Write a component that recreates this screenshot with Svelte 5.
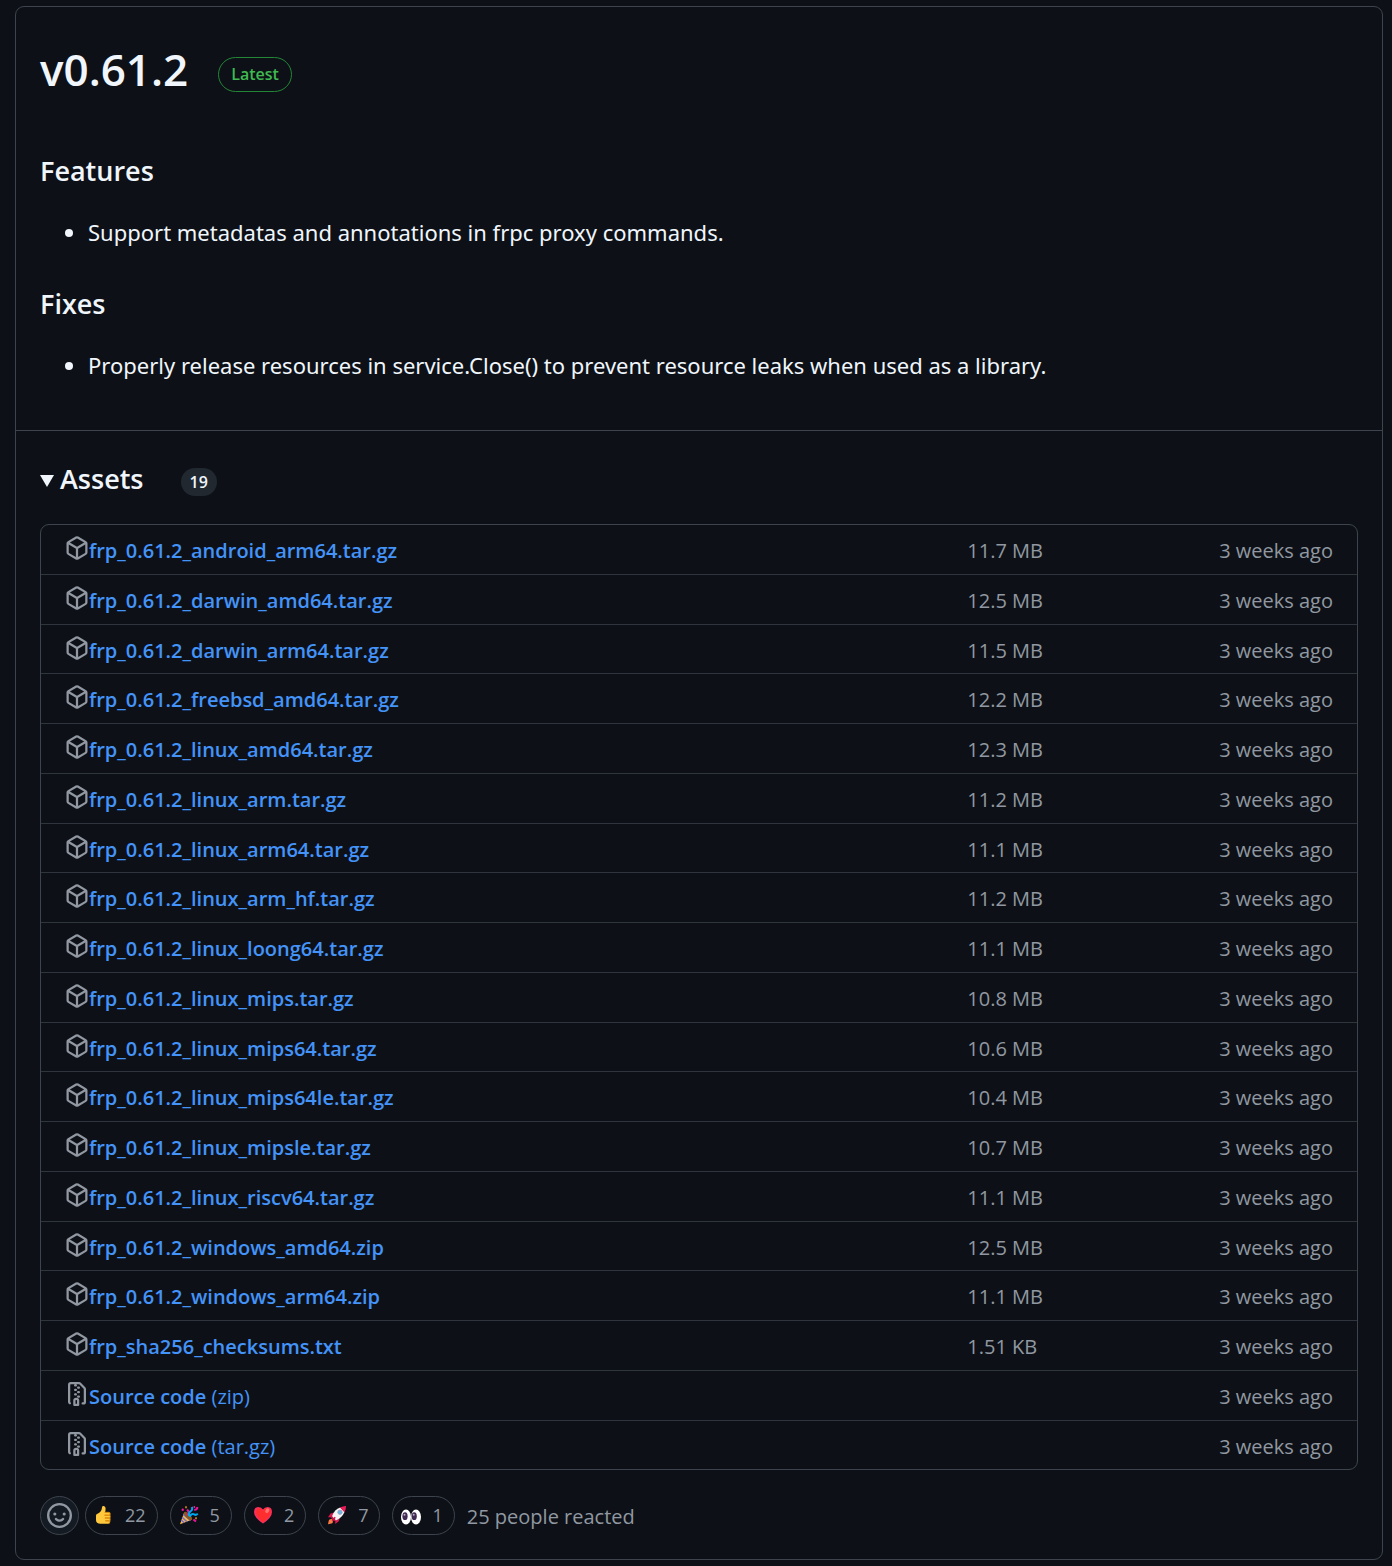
<script>
  const assets = [
    { name: 'frp_0.61.2_android_arm64.tar.gz', size: '11.7 MB' },
    { name: 'frp_0.61.2_darwin_amd64.tar.gz', size: '12.5 MB' },
    { name: 'frp_0.61.2_darwin_arm64.tar.gz', size: '11.5 MB' },
    { name: 'frp_0.61.2_freebsd_amd64.tar.gz', size: '12.2 MB' },
    { name: 'frp_0.61.2_linux_amd64.tar.gz', size: '12.3 MB' },
    { name: 'frp_0.61.2_linux_arm.tar.gz', size: '11.2 MB' },
    { name: 'frp_0.61.2_linux_arm64.tar.gz', size: '11.1 MB' },
    { name: 'frp_0.61.2_linux_arm_hf.tar.gz', size: '11.2 MB' },
    { name: 'frp_0.61.2_linux_loong64.tar.gz', size: '11.1 MB' },
    { name: 'frp_0.61.2_linux_mips.tar.gz', size: '10.8 MB' },
    { name: 'frp_0.61.2_linux_mips64.tar.gz', size: '10.6 MB' },
    { name: 'frp_0.61.2_linux_mips64le.tar.gz', size: '10.4 MB' },
    { name: 'frp_0.61.2_linux_mipsle.tar.gz', size: '10.7 MB' },
    { name: 'frp_0.61.2_linux_riscv64.tar.gz', size: '11.1 MB' },
    { name: 'frp_0.61.2_windows_amd64.zip', size: '12.5 MB' },
    { name: 'frp_0.61.2_windows_arm64.zip', size: '11.1 MB' },
    { name: 'frp_sha256_checksums.txt', size: '1.51 KB' },
    { name: 'Source code', format: '(zip)' },
    { name: 'Source code', format: '(tar.gz)' }
  ];

  let reactions = $state([
    { id: 'thumbs', count: 22, on: false },
    { id: 'tada', count: 5, on: false },
    { id: 'heart', count: 2, on: false },
    { id: 'rocket', count: 7, on: false },
    { id: 'eyes', count: 1, on: false }
  ]);

  function toggle(reaction) {
    reaction.on = !reaction.on;
    reaction.count += reaction.on ? 1 : -1;
  }
</script>

<main class="release">
  <section class="notes">
    <header class="title">
      <h1>v0.61.2</h1>
      <a class="label" href="#latest">Latest</a>
    </header>

    <h3>Features</h3>
    <ul>
      <li>Support metadatas and annotations in frpc proxy commands.</li>
    </ul>

    <h3>Fixes</h3>
    <ul>
      <li>Properly release resources in service.Close() to prevent resource leaks when used as a library.</li>
    </ul>
  </section>

  <section class="footer">
    <details open>
      <summary>
        <svg class="caret" width="14" height="12" viewBox="0 0 14 12"><path d="M0 0h14L7 12z" fill="currentColor" /></svg>
        <span class="assets-title">Assets</span>
        <span class="counter">{assets.length}</span>
      </summary>

      <ul class="assets">
        {#each assets as asset}
          <li>
            <div class="file">
              {#if asset.format}
                <svg width="24" height="24" viewBox="0 0 16 16" fill="currentColor">
                  <path d="M3.5 1.75v11.5c0 .09.048.173.126.217a.75.75 0 0 1-.752 1.298A1.748 1.748 0 0 1 2 13.25V1.75C2 .784 2.784 0 3.75 0h5.586c.464 0 .909.185 1.237.513l2.914 2.914c.329.328.513.773.513 1.237v8.586A1.75 1.75 0 0 1 12.25 15h-.5a.75.75 0 0 1 0-1.5h.5a.25.25 0 0 0 .25-.25V4.664a.25.25 0 0 0-.073-.177L9.513 1.573a.25.25 0 0 0-.177-.073H7.25a.75.75 0 0 1 0 1.5h-.5a.75.75 0 0 1 0-1.5h-3a.25.25 0 0 0-.25.25Zm3.75 8.75h.5c.966 0 1.75.784 1.75 1.75v3a.75.75 0 0 1-.75.75h-2.5a.75.75 0 0 1-.75-.75v-3c0-.966.784-1.75 1.75-1.75ZM6 5.25a.75.75 0 0 1 .75-.75h.5a.75.75 0 0 1 0 1.5h-.5A.75.75 0 0 1 6 5.25Zm.75 2.25h.5a.75.75 0 0 1 0 1.5h-.5a.75.75 0 0 1 0-1.5ZM8 6.75A.75.75 0 0 1 8.75 6h.5a.75.75 0 0 1 0 1.5h-.5A.75.75 0 0 1 8 6.75ZM8.75 3h.5a.75.75 0 0 1 0 1.5h-.5a.75.75 0 0 1 0-1.5ZM8 9.75A.75.75 0 0 1 8.75 9h.5a.75.75 0 0 1 0 1.5h-.5A.75.75 0 0 1 8 9.75Zm-1 2.5v2.25h1v-2.25a.25.25 0 0 0-.25-.25h-.5a.25.25 0 0 0-.25.25Z" />
                </svg>
              {:else}
                <svg width="24" height="24" viewBox="0 0 16 16" fill="currentColor">
                  <path d="m8.878.392 5.25 3.045c.54.314.872.89.872 1.514v6.098a1.75 1.75 0 0 1-.872 1.514l-5.25 3.045a1.75 1.75 0 0 1-1.756 0l-5.25-3.045A1.75 1.75 0 0 1 1 11.049V4.951c0-.624.332-1.201.872-1.514L7.122.392a1.75 1.75 0 0 1 1.756 0ZM7.875 1.69l-4.63 2.685L8 7.133l4.755-2.758-4.63-2.685a.248.248 0 0 0-.25 0ZM2.5 5.677v5.372c0 .09.047.171.125.216l4.625 2.683V8.432Zm6.25 8.271 4.625-2.683a.25.25 0 0 0 .125-.216V5.677L8.75 8.432Z" />
                </svg>
              {/if}
              <a href="#download"><b>{asset.name}</b>{#if asset.format}&nbsp;{asset.format}{/if}</a>
            </div>
            <span class="size">{asset.size ?? ''}</span>
            <time>3 weeks ago</time>
          </li>
        {/each}
      </ul>
    </details>

    <div class="reactions">
      <button class="add" aria-label="Add a reaction">
        <svg width="25" height="25" viewBox="0 0 16 16" fill="currentColor">
          <path d="M8 0a8 8 0 1 1 0 16A8 8 0 0 1 8 0ZM1.5 8a6.5 6.5 0 1 0 13 0 6.5 6.5 0 0 0-13 0Zm3.82 1.636a.75.75 0 0 1 1.038.175l.007.009c.103.118.22.222.35.31.264.178.683.37 1.285.37.602 0 1.02-.192 1.285-.371.13-.088.247-.192.35-.31l.007-.008a.75.75 0 0 1 1.222.87l-.022-.015c.02.013.021.015.021.015v.001l-.001.002-.002.003-.005.007-.014.019a2.066 2.066 0 0 1-.184.213c-.16.166-.338.316-.53.445-.63.418-1.37.638-2.127.629-.946 0-1.652-.308-2.126-.63a3.331 3.331 0 0 1-.715-.657l-.014-.02-.005-.006-.002-.003v-.002h-.001l.613-.432-.614.43a.75.75 0 0 1 .183-1.044ZM12 7a1 1 0 1 1-2 0 1 1 0 0 1 2 0ZM5 8a1 1 0 1 1 0-2 1 1 0 0 1 0 2Z" />
        </svg>
      </button>

      {#each reactions as reaction}
        <button class="reaction" aria-label={reaction.id} aria-pressed={reaction.on} onclick={() => toggle(reaction)}>
          <svg width="20" height="20" viewBox="0 0 20 20">
            {#if reaction.id === 'thumbs'}
              <path d="M2 10.5Q2 9 4 8.6Q7.5 7 8 2.5Q8.1.8 9.7 1.1Q12 1.5 11.5 5L11.2 7.3H15Q16.3 7.3 16.3 8.7V16.5Q16.3 18.8 14 18.8H6.5Q2 18.8 2 15z" fill="#ffc83d" />
              <path d="M10.5 7.3h4.2q1.6.2 1.4 1.6-.1 1.2-1.4 1.3h-4.2m0 0h4.4q1.4.1 1.4 1.4t-1.4 1.4h-4m0 0h3.8q1.3.1 1.3 1.4t-1.3 1.4h-3.4m0 0h3.2q1.2.2 1.1 1.4-.1 1.5-1.6 1.5" fill="none" stroke="#d67d00" stroke-width=".8" />
            {:else if reaction.id === 'tada'}
              <path d="m5.2 7.2 7.6 7.5L1 19.2z" fill="#fcb93d" />
              <path d="m4.4 9.4 7.2 6M3.2 12.3l4.7 4.5M2.2 15l3 2.8" stroke="#6b68d8" stroke-width="1.5" />
              <ellipse cx="9" cy="11" rx="5.2" ry="2.2" transform="rotate(45 9 11)" fill="#8b5a20" />
              <path d="M8.6 10.4Q11 7 8 4.6M15.2 4.7Q18.3 5 18.3 2M14.4 14.5l2.6 2" fill="none" stroke="#f0139a" stroke-width="2" />
              <path d="M10 10.8Q9.5 7 12 5.8 14 4.7 12.8 2M10.6 11.7Q13 7.6 15.4 9.5q1.3 1 3.4-.7" fill="none" stroke="#00a6ed" stroke-width="2" />
              <path d="M6 1.2h2v2H6zM16 12.2h2v2h-2z" fill="#b4770d" />
              <circle cx="3.7" cy="4.8" r="1.2" fill="#f0139a" />
              <path d="M14.6 1h1.4v2h-1.4z" fill="#f0139a" />
            {:else if reaction.id === 'heart'}
              <path d="M10 18.5Q1 12.5 1 7Q1 2.2 5.2 2Q8.5 2 10 4.5Q11.5 2 14.8 2Q19 2.2 19 7Q19 12.5 10 18.5z" fill="#f92f60" />
              <path d="M10 17Q4 12.5 3.2 8Q3 4 6 3.3Q8.8 3.3 10 6Q12 2.5 14.9 2.9Q18 3.5 17.8 7.2Q17 12 10 17z" fill="#ff2e2e" />
              <ellipse cx="14.3" cy="5.7" rx="1.8" ry="2.5" transform="rotate(35 14.3 5.7)" fill="#ff7370" />
            {:else if reaction.id === 'rocket'}
              <path d="m7.6 7.5-4 1L1 12.2l5 .1 2.2 2 .1 4.7 3.5-2.7 1-3.8z" fill="#d9184f" />
              <path d="M5 11.5Q7.5 4.2 13.2 2.6L17.5 7Q15 13 8.7 15.4z" fill="#f4f4f4" />
              <path d="M13 2.6Q16.4 1 19 1.1Q19.2 4 17.5 7.2z" fill="#ef1c59" />
              <path d="m5 11.3 3.9 4-1.4 1-3.7-3.6z" fill="#c3174c" />
              <circle cx="13" cy="7.2" r="2.2" fill="#65b8e8" stroke="#a79bb1" stroke-width=".8" />
              <path d="M4.6 14Q2 13.8 1.7 15.8L1 19.3l3.4-.8Q6.2 18 6 15.5z" fill="#ff7b45" />
              <path d="m8.2 12.2-2.8 3.5" stroke="#d5144d" stroke-width="1.5" />
            {:else}
              <ellipse cx="5" cy="12" rx="5" ry="7.4" fill="#fff" />
              <ellipse cx="15" cy="12" rx="5" ry="7.4" fill="#fff" />
              <ellipse cx="4" cy="11.2" rx="2.6" ry="3.9" fill="#402a53" />
              <ellipse cx="13.2" cy="11.2" rx="2.6" ry="3.9" fill="#402a53" />
              <circle cx="3.5" cy="9.7" r="1" fill="#b8adbf" />
              <circle cx="12.7" cy="9.7" r="1" fill="#b8adbf" />
            {/if}
          </svg>
          <span>{reaction.count}</span>
        </button>
      {/each}

      <span class="total">25 people reacted</span>
    </div>
  </section>
</main>

<style>
  :global(body) {
    background: #0d1117;
  }

  .release {
    margin: 6px 9px 7px 15px;
    border: 1px solid #3d444d;
    border-radius: 9px;
    color: #f0f6fc;
    font-family: "Open Sans", "Noto Sans", sans-serif;
    font-size: 22px;
    line-height: 36px;
  }

  .notes {
    padding: 24px 24px 47px;
    border-bottom: 1px solid #3d444d;
  }

  .notes li {
    font-family: "Noto Sans", "Open Sans", sans-serif;
  }

  .title {
    display: flex;
    align-items: center;
    gap: 30px;
    margin-bottom: 46px;
  }

  h1 {
    margin: 0;
    font-size: 44px;
    line-height: 76px;
    font-weight: 600;
  }

  .label {
    margin-top: 10px;
    padding: 0 12px;
    border: 1px solid #238636;
    border-radius: 20px;
    color: #3fb950;
    font-size: 16px;
    line-height: 33px;
    font-weight: 600;
    text-decoration: none;
  }

  h3 {
    margin: 0 0 25px;
    font-size: 27px;
    line-height: 36px;
    font-weight: 600;
  }

  ul {
    margin: 0;
    padding: 0 0 0 48px;
  }

  .notes ul + h3 {
    margin-top: 36px;
  }

  .footer {
    padding: 28px 24px 24px;
  }

  summary {
    display: flex;
    align-items: center;
    margin-bottom: 25px;
    line-height: 40px;
    list-style: none;
    cursor: pointer;
  }

  .caret {
    margin: 4px 6px 0 0;
  }

  .assets-title {
    font-size: 27px;
    font-weight: 600;
  }

  .counter {
    margin: 6px 0 0 37px;
    padding: 0 9px;
    border-radius: 20px;
    background: #212830;
    font-size: 16px;
    line-height: 28px;
    font-weight: 600;
  }

  .assets {
    padding: 0;
    border: 1px solid #3d444d;
    border-radius: 9px;
    list-style: none;
    color: #9198a1;
    font-size: 20px;
  }

  .assets li {
    display: grid;
    grid-template-columns: 71% 1fr auto;
    padding: 8px 24px 5px;
    border-top: 1px solid #3d444db3;
  }

  .assets li:first-child {
    border-top: 0;
  }

  .assets li:nth-child(4n + 3) {
    padding-bottom: 4px;
  }

  .file {
    display: flex;
  }

  .file svg {
    margin-top: 3px;
  }

  .file a {
    color: #4493f8;
    text-decoration: none;
  }

  .file a:hover {
    text-decoration: underline;
  }

  b {
    font-weight: 600;
  }

  .size {
    padding-left: 2px;
  }

  .reactions {
    display: flex;
    align-items: center;
    gap: 12px;
    margin-top: 25px;
  }

  button {
    display: flex;
    align-items: center;
    justify-content: center;
    height: 39px;
    padding: 0 11px 0 8px;
    border: 1px solid #3d444d;
    border-radius: 20px;
    background: none;
    color: #9198a1;
    font: inherit;
    font-size: 18px;
    cursor: pointer;
  }

  .reaction {
    gap: 11px;
  }

  .add {
    width: 39px;
    margin-right: -6px;
    padding: 0;
    background: #151b23;
  }

  .total {
    padding-top: 4px;
    color: #9198a1;
    font-size: 20px;
  }
</style>
